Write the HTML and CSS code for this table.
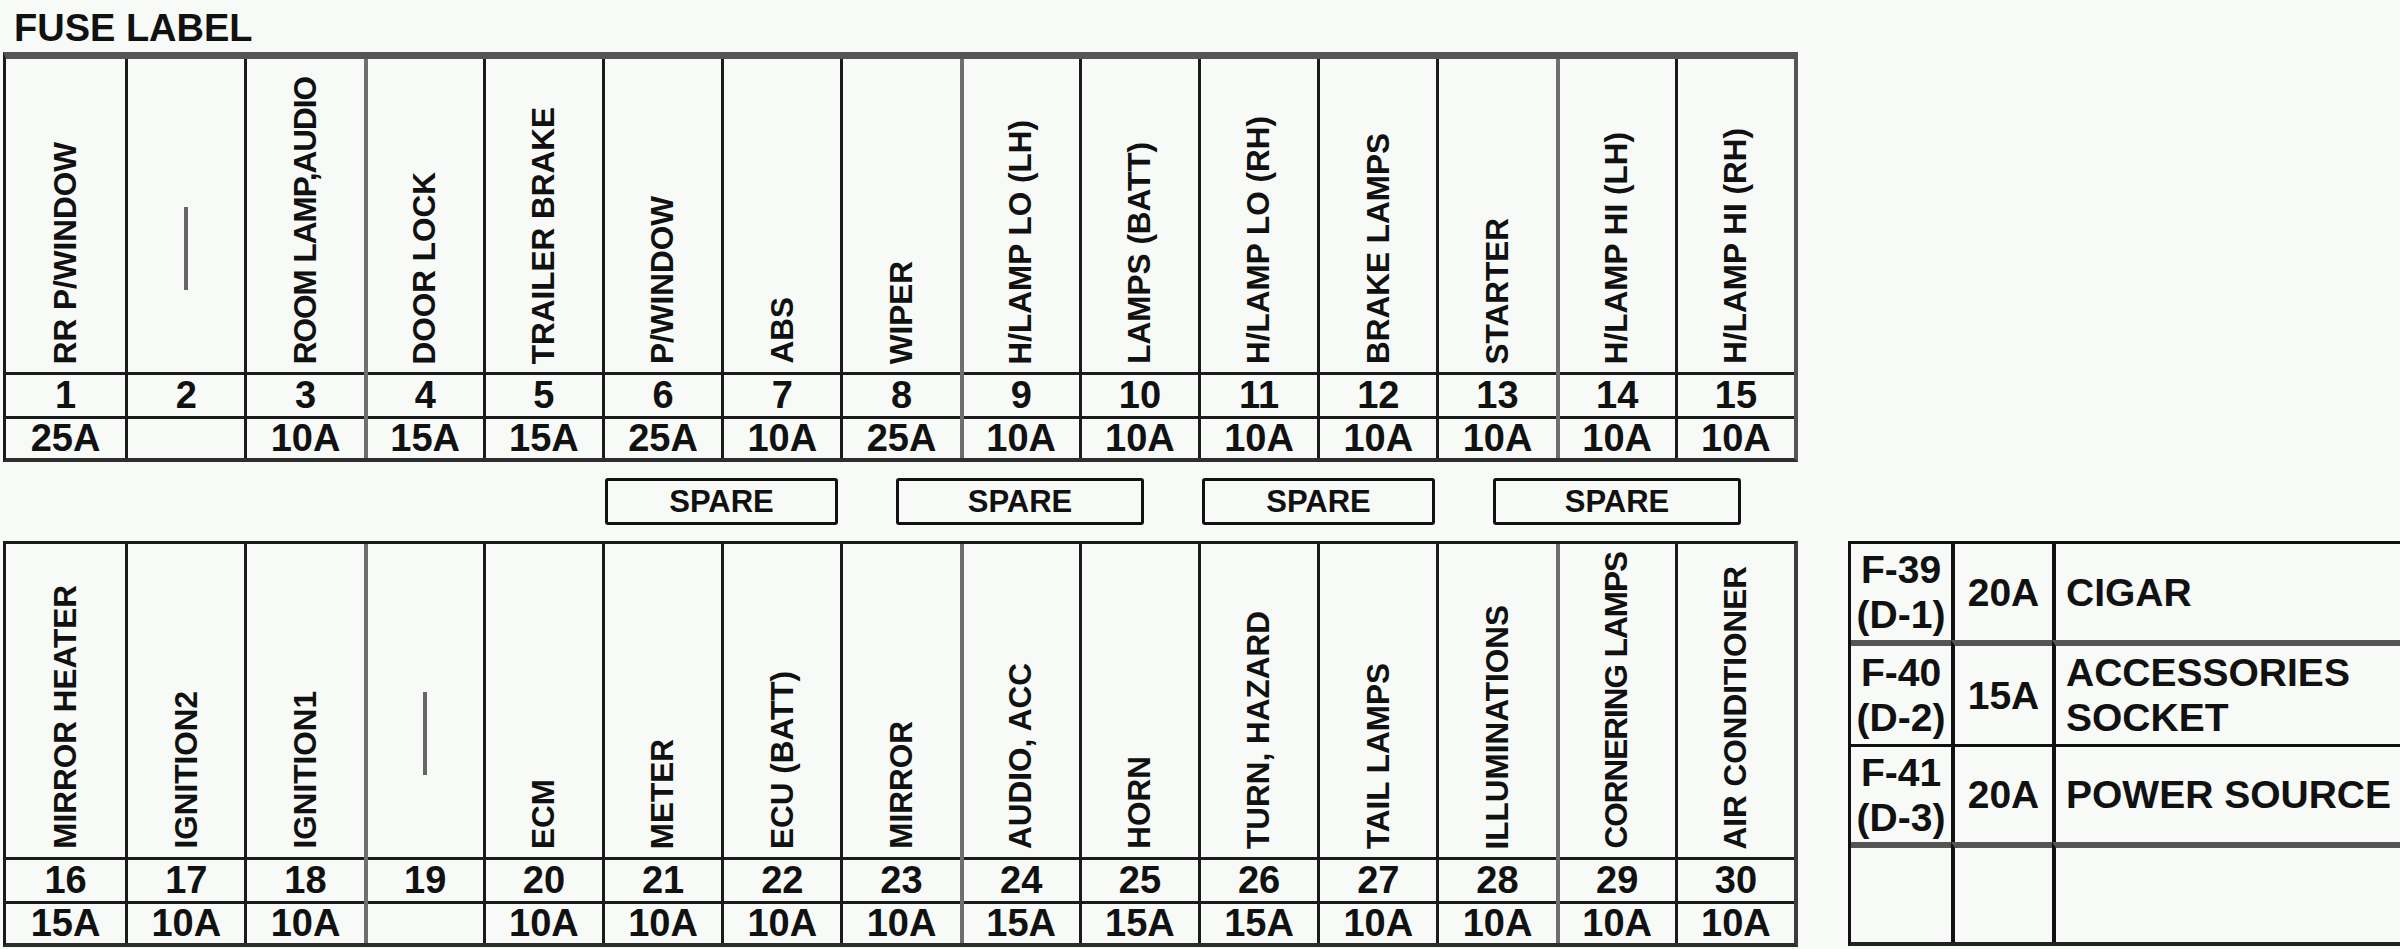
FILE: index.html
```html
<!DOCTYPE html>
<html lang="en">
<head>
    <meta charset="UTF-8">
    <title>Fuse Label</title>
    <link rel="stylesheet" href="styles.css">
</head>
<body>
    <div class="sheet">
        <div class="title">FUSE LABEL</div>

        <!-- upper fuse row 1-15 -->
        <div class="fuse-block upper">
            <div class="fuse"><div class="name"><span>RR P/WINDOW</span></div><div class="no">1</div><div class="amp">25A</div></div>
            <div class="fuse"><div class="name"><i class="dash"></i></div><div class="no">2</div><div class="amp"></div></div>
            <div class="fuse"><div class="name"><span class="tight">ROOM LAMP,AUDIO</span></div><div class="no">3</div><div class="amp">10A</div></div>
            <div class="fuse dim"><div class="name"><span>DOOR LOCK</span></div><div class="no">4</div><div class="amp">15A</div></div>
            <div class="fuse"><div class="name"><span>TRAILER BRAKE</span></div><div class="no">5</div><div class="amp">15A</div></div>
            <div class="fuse"><div class="name"><span>P/WINDOW</span></div><div class="no">6</div><div class="amp">25A</div></div>
            <div class="fuse"><div class="name"><span>ABS</span></div><div class="no">7</div><div class="amp">10A</div></div>
            <div class="fuse"><div class="name"><span>WIPER</span></div><div class="no">8</div><div class="amp">25A</div></div>
            <div class="fuse dim"><div class="name"><span>H/LAMP LO (LH)</span></div><div class="no">9</div><div class="amp">10A</div></div>
            <div class="fuse"><div class="name"><span>LAMPS (BATT)</span></div><div class="no">10</div><div class="amp">10A</div></div>
            <div class="fuse"><div class="name"><span>H/LAMP LO (RH)</span></div><div class="no">11</div><div class="amp">10A</div></div>
            <div class="fuse"><div class="name"><span>BRAKE LAMPS</span></div><div class="no">12</div><div class="amp">10A</div></div>
            <div class="fuse"><div class="name"><span>STARTER</span></div><div class="no">13</div><div class="amp">10A</div></div>
            <div class="fuse dim"><div class="name"><span>H/LAMP HI (LH)</span></div><div class="no">14</div><div class="amp">10A</div></div>
            <div class="fuse"><div class="name"><span>H/LAMP HI (RH)</span></div><div class="no">15</div><div class="amp">10A</div></div>
        </div>

        <!-- spare slots -->
        <div class="spares">
            <div class="spare">SPARE</div>
            <div class="spare wide">SPARE</div>
            <div class="spare">SPARE</div>
            <div class="spare wide">SPARE</div>
        </div>

        <div class="lower">
            <!-- lower fuse row 16-30 -->
            <div class="fuse-block">
                <div class="fuse"><div class="name"><span>MIRROR HEATER</span></div><div class="no">16</div><div class="amp">15A</div></div>
                <div class="fuse"><div class="name"><span>IGNITION2</span></div><div class="no">17</div><div class="amp">10A</div></div>
                <div class="fuse"><div class="name"><span>IGNITION1</span></div><div class="no">18</div><div class="amp">10A</div></div>
                <div class="fuse dim"><div class="name"><i class="dash"></i></div><div class="no">19</div><div class="amp"></div></div>
                <div class="fuse"><div class="name"><span>ECM</span></div><div class="no">20</div><div class="amp">10A</div></div>
                <div class="fuse"><div class="name"><span>METER</span></div><div class="no">21</div><div class="amp">10A</div></div>
                <div class="fuse"><div class="name"><span>ECU (BATT)</span></div><div class="no">22</div><div class="amp">10A</div></div>
                <div class="fuse"><div class="name"><span>MIRROR</span></div><div class="no">23</div><div class="amp">10A</div></div>
                <div class="fuse dim"><div class="name"><span>AUDIO, ACC</span></div><div class="no">24</div><div class="amp">15A</div></div>
                <div class="fuse"><div class="name"><span>HORN</span></div><div class="no">25</div><div class="amp">15A</div></div>
                <div class="fuse"><div class="name"><span>TURN, HAZARD</span></div><div class="no">26</div><div class="amp">15A</div></div>
                <div class="fuse"><div class="name"><span>TAIL LAMPS</span></div><div class="no">27</div><div class="amp">10A</div></div>
                <div class="fuse"><div class="name"><span>ILLUMINATIONS</span></div><div class="no">28</div><div class="amp">10A</div></div>
                <div class="fuse dim"><div class="name"><span class="tight">CORNERING LAMPS</span></div><div class="no">29</div><div class="amp">10A</div></div>
                <div class="fuse"><div class="name"><span>AIR CONDITIONER</span></div><div class="no">30</div><div class="amp">10A</div></div>
            </div>

            <!-- socket fuses -->
            <div class="extra">
                <div class="cell id">F-39<br>(D-1)</div>
                <div class="cell rating">20A</div>
                <div class="cell use">CIGAR</div>

                <div class="cell id row-gray">F-40<br>(D-2)</div>
                <div class="cell rating row-gray">15A</div>
                <div class="cell use row-gray">ACCESSORIES<br>SOCKET</div>

                <div class="cell id row-dark">F-41<br>(D-3)</div>
                <div class="cell rating row-dark">20A</div>
                <div class="cell use row-dark">POWER SOURCE</div>

                <div class="cell id row-gray"></div>
                <div class="cell rating row-gray"></div>
                <div class="cell use row-gray"></div>
            </div>
        </div>
    </div>
</body>
</html>
```

FILE: styles.css
```css
html, body {
    margin: 0;
    padding: 0;
    overflow: hidden;
}
body {
    font-family: "Liberation Sans", Arial, sans-serif;
    font-weight: bold;
    background-color: #f7faf6;
    color: #111;
}
.sheet {
    padding: 10px 0 0 3px;
    width: 2500px;
}
.title {
    font-size: 38px;
    line-height: 37px;
    margin-left: 11px;
}
.fuse-block {
    flex: none;
    display: grid;
    grid-template-columns: repeat(15, 1fr);
    width: 1795px;
    box-sizing: border-box;
    border: 3px solid #1b1b1b;
    border-right: 4px solid #3c3c3c;
    border-bottom: 4px solid #2e2e2e;
}
.fuse-block.upper {
    margin-top: 5px;
    border-top: 7px solid #555;
    border-right-color: #555;
}
.fuse {
    display: flex;
    flex-direction: column;
    border-left: 3px solid #1b1b1b;
    min-width: 0;
}
.fuse:first-child {
    border-left: none;
}
.fuse.dim {
    border-left: 4px solid #6e6e6e;
}
.name {
    height: 313px;
    box-sizing: border-box;
    padding-bottom: 8px;
    display: flex;
    flex-direction: column;
    justify-content: flex-end;
    align-items: center;
}
.name span {
    writing-mode: vertical-rl;
    transform: rotate(180deg);
    font-size: 31.5px;
    line-height: 1;
    white-space: nowrap;
}
.name span.tight {
    letter-spacing: -1px;
}
.dash {
    display: block;
    width: 4px;
    height: 83px;
    margin-bottom: 74px;
    background-color: #666;
}
.no, .amp {
    box-sizing: border-box;
    border-top: 3px solid #1b1b1b;
    text-align: center;
    font-size: 38px;
}
.no {
    height: 44px;
    line-height: 41px;
}
.amp {
    height: 42px;
    line-height: 39px;
}
.spares {
    display: flex;
    gap: 58px;
    margin: 16px 0 16px 602px;
}
.spare {
    width: 233px;
    height: 47px;
    box-sizing: border-box;
    border: 3px solid #111;
    border-radius: 3px;
    text-align: center;
    font-size: 31px;
    line-height: 41px;
}
.spare.wide {
    width: 248px;
}
.lower {
    display: flex;
    align-items: flex-start;
}
.extra {
    flex: none;
    margin-left: 50px;
    width: 620px;
    display: grid;
    grid-template-columns: 100px 101px 1fr;
    grid-template-rows: 96px 104px 98px 100px;
    border-top: 3px solid #111;
    border-left: 3px solid #111;
    border-bottom: 4px solid #222;
    font-size: 39px;
}
.cell {
    display: flex;
    align-items: center;
    box-sizing: border-box;
    line-height: 45px;
}
.cell.id {
    justify-content: center;
    text-align: center;
}
.cell.rating {
    justify-content: center;
    border-left: 4px solid #111;
}
.cell.use {
    padding-left: 10px;
    border-left: 4px solid #111;
}
.row-gray {
    border-top: 6px solid #555;
}
.row-dark {
    border-top: 3px solid #111;
}
```
